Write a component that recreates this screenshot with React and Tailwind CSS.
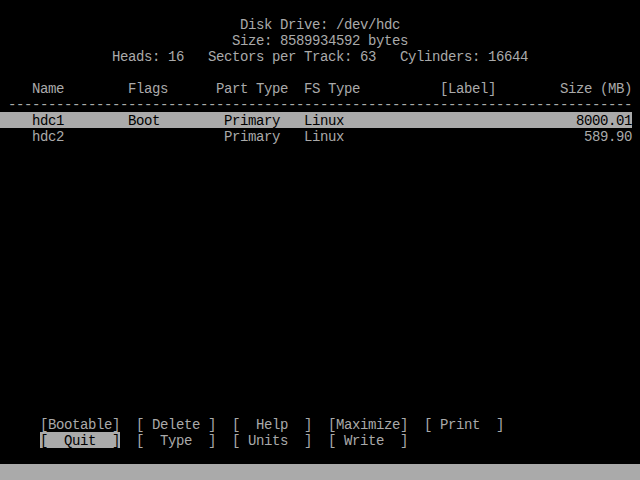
import React from 'react';

// cfdisk screen: 80 cols x 30 rows, 8x16 cells
const pad = (s, n) => s + ' '.repeat(Math.max(0, n - s.length));
const at = (col, s) => ' '.repeat(col) + s;

const header = [
  '',
  at(30, 'Disk Drive: /dev/hdc'),
  at(29, 'Size: 8589934592 bytes'),
  at(14, 'Heads: 16   Sectors per Track: 63   Cylinders: 16644'),
  '',
  pad(at(4, 'Name'), 16) + pad('Flags', 11) + pad('Part Type', 11) + pad('FS Type', 17) + pad('[Label]', 15) + 'Size (MB)',
  ' ' + '-'.repeat(78),
];

const partitions = [
  { name: 'hdc1', flags: 'Boot', type: 'Primary', fs: 'Linux', size: '8000.01', selected: true },
  { name: 'hdc2', flags: '', type: 'Primary', fs: 'Linux', size: '589.90' },
];

const partLine = (p) => {
  const left = pad(at(4, p.name), 16) + pad(p.flags, 12) + pad(p.type, 10) + p.fs;
  return left + ' '.repeat(79 - left.length - p.size.length) + p.size;
};

const menuTop = ['[Bootable]', '[ Delete ]', '[  Help  ]', '[Maximize]', '[ Print  ]'];
const menuBottom = ['[  Quit  ]', '[  Type  ]', '[ Units  ]', '[ Write  ]'];

const Row = ({ children, className = '' }) => (
  <div className={'h-4 pt-[2px] leading-[14px] whitespace-pre ' + className}>{children}</div>
);

const App = () => {
  return (
    <div
      className="w-[640px] h-[480px] bg-black text-[#aaaaaa] flex flex-col overflow-hidden text-[14px] tracking-[-0.4px]"
      style={{ fontFamily: '"Liberation Mono", "DejaVu Sans Mono", monospace' }}
    >
      {header.map((line, i) => (
        <Row key={'h' + i}>{line}</Row>
      ))}
      {partitions.map((p) => (
        <Row key={p.name} className={p.selected ? 'w-[632px] bg-[#aaaaaa] text-black' : ''}>
          {partLine(p)}
        </Row>
      ))}
      {/* empty partition area */}
      <div className="flex-1" />
      <Row>{'     ' + menuTop.join('  ')}</Row>
      <Row>
        {'     '}
        {menuBottom.map((m, i) => (
          <React.Fragment key={m}>
            {i > 0 && '  '}
            {i === 0 ? (
              <span className="inline-block align-top h-4 -mt-[2px] pt-[2px] bg-[#aaaaaa] text-black">{m}</span>
            ) : (
              m
            )}
          </React.Fragment>
        ))}
      </Row>
      <Row> </Row>
      <div className="h-4 shrink-0 bg-[#aaaaaa]" />
    </div>
  );
};

export default App;
